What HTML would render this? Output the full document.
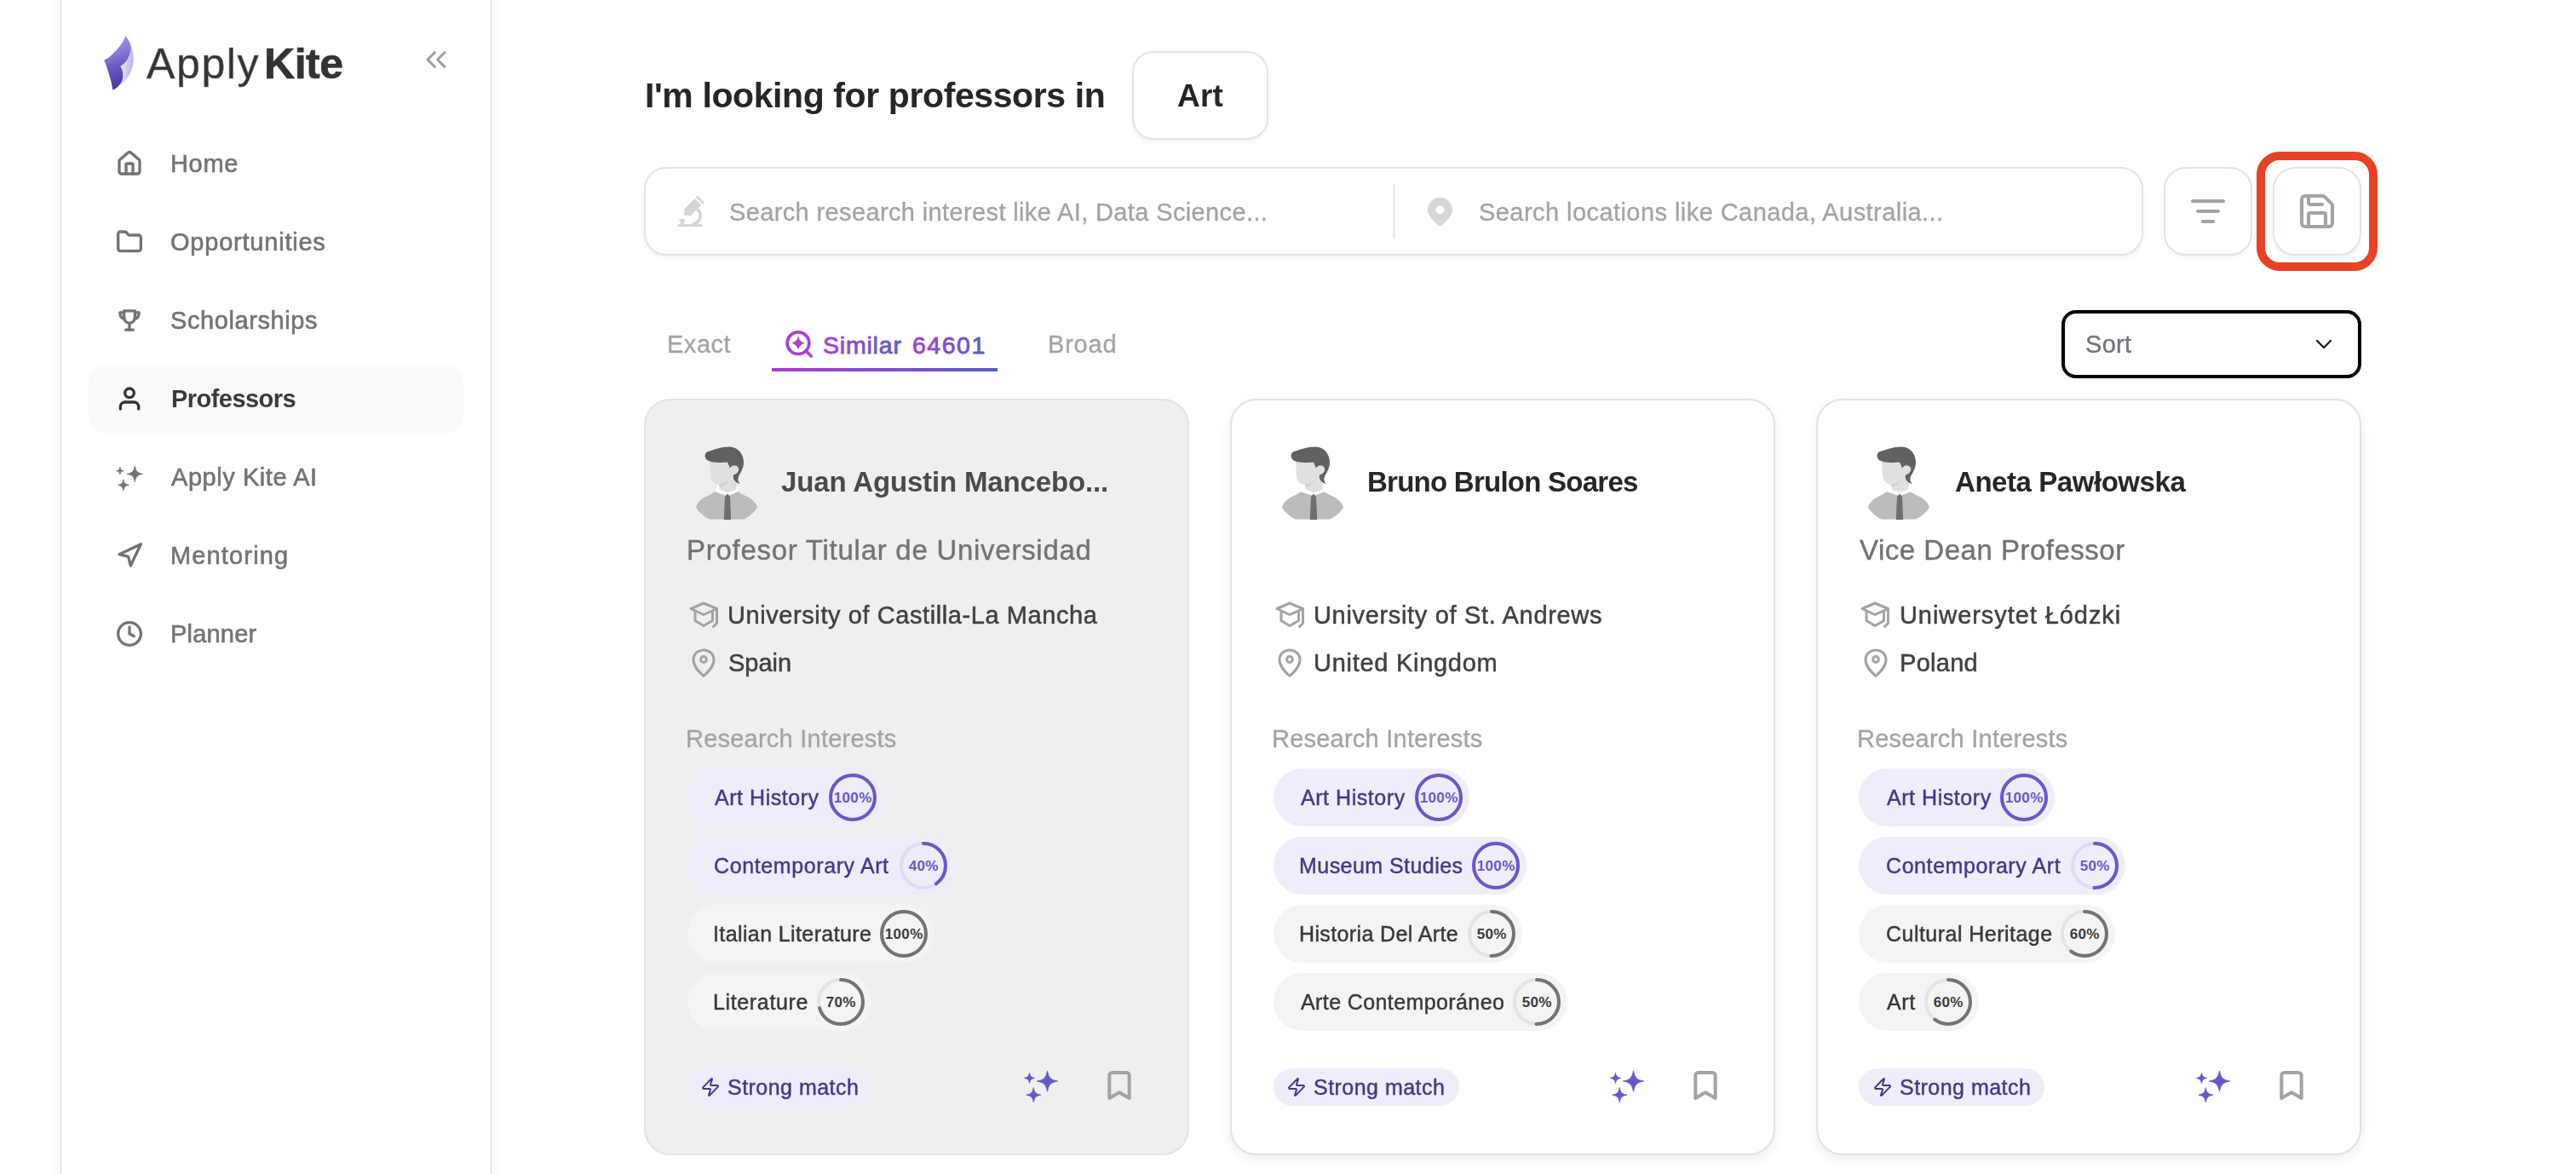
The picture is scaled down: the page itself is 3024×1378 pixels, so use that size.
<!DOCTYPE html>
<html lang="en">
<head>
<meta charset="utf-8">
<title>Apply Kite - Professors</title>
<style>
*{box-sizing:border-box;margin:0;padding:0}
html,body{width:3024px;height:1378px;overflow:hidden;background:#fff}
body{position:relative;font-family:"Liberation Sans",sans-serif;color:#262626}
.abs{position:absolute}
.t{position:absolute;white-space:nowrap;line-height:1;will-change:transform}
svg{display:block;overflow:visible}
.ic{position:absolute;fill:none;stroke:currentColor;stroke-linecap:round;stroke-linejoin:round}

/* sidebar */
#sidebar{position:absolute;left:71px;top:-20px;width:506px;height:1420px;background:#fff;border:1px solid #dadada;box-shadow:0 0 18px rgba(0,0,0,.07)}
.nav .t{font-size:28px;font-weight:400;color:#737373;-webkit-text-stroke:.6px #737373;left:201px}
.nav .ic{color:#737373;stroke-width:2.5}
.nav .active{position:absolute;left:104px;top:428px;width:440px;height:80px;border-radius:18px;background:#f9f9f9}

/* main */
.h1{font-size:40px;font-weight:700;color:#262626}
.box{position:absolute;background:#fff;border:2px solid #e4e4e4;box-shadow:0 3px 5px rgba(0,0,0,.05)}
.ph{font-size:28px;color:#a3a3a3;-webkit-text-stroke:.3px #a3a3a3}
.tab{font-size:28px;color:#a3a3a3;-webkit-text-stroke:.3px #a3a3a3}
.grad{background:linear-gradient(90deg,#a83fd1,#5a5cc7);-webkit-background-clip:text;background-clip:text;color:transparent;-webkit-text-stroke:.5px transparent}

/* cards */
.card{position:absolute;top:468px;height:888px;border-radius:31px;background:#fff;border:2px solid #e2e2e4;box-shadow:0 5px 16px rgba(0,0,0,.065)}
.card.hover{background:#efeff2;box-shadow:none;border-color:#e3e3e8}
.meta{color:#404040;-webkit-text-stroke:.5px #404040}
.mi{color:#a3a3a3;stroke-width:3}
.pill{position:absolute;height:68px;border-radius:34px}
.pill.p{background:#efedf9}
.pill.g{background:#f4f4f4}
.pill.p.hover{background:#eeecf8}
.pill.g.hover{background:#f4f4f5}
.pt.p{color:#3f3a8c;-webkit-text-stroke:.45px #3f3a8c}
.pt.g{color:#383838;-webkit-text-stroke:.45px #383838}
.ring text{font-family:"Liberation Sans",sans-serif;font-size:17px;font-weight:700}
.strong{position:absolute;width:218px;height:44px;border-radius:22px;background:#efedf9}
.strong.hover{background:#eeecf8}
.g1,.g2{background:linear-gradient(90deg,#a83fd1,#5a5cc7);-webkit-background-clip:text;background-clip:text;color:transparent;-webkit-text-stroke:.5px transparent;padding-right:2px}
</style>
</head>
<body>
<!-- SIDEBAR -->
<div id="sidebar"></div>
<div class="nav" id="nav">
  <svg class="abs" style="left:121px;top:42px" width="37" height="64" viewBox="0 0 37 64">
    <defs>
      <linearGradient id="kg1" x1="0.3" y1="0" x2="0.45" y2="1"><stop offset="0" stop-color="#988ce3"/><stop offset=".3" stop-color="#8a7cdb"/><stop offset=".55" stop-color="#6c5dc4"/><stop offset="1" stop-color="#4537a0"/></linearGradient>
      <linearGradient id="kg2" x1="0.35" y1="0.45" x2="1" y2="0.6"><stop offset="0" stop-color="#efedf9"/><stop offset="1" stop-color="#b4abe4"/></linearGradient>
    </defs>
    <path d="M32.4 11.2 C34.5 15 35.8 20 35.7 25.7 C35.6 31 35 35 33.9 38.7 C32.8 42 31.5 45 29.5 48.1 C27.5 51 25 54 21.6 56.8 C18.5 59.5 15 62 11.4 63.7 L20.3 35.8 L28 28.5 Z" fill="url(#kg2)"/>
    <path d="M26.5 0.3 C29 4 31.5 8 32.4 11.2 C33 15 32.5 18 31.7 20 C30.5 24 29 26.5 28 28.5 C26 31.5 23.5 33.8 20.3 35.8 C22 38.5 23 41 23.2 44 C23.4 47 23.3 49 23 50.5 C22.3 53.5 21 55.5 19.4 57.5 C17 60.5 14.5 62.3 11.4 63.7 C10.8 60 10 56 9 52 C7.3 46 5.5 40 3.5 34.3 L1.2 28.5 C5 27 8 24.5 10.7 22 C14 19 17 15.5 19.4 12.6 C22 9.3 24.5 5 26.5 0.3 Z" fill="url(#kg1)"/>
  </svg>
<div class="t " style="left:172.0px;top:50.2px;font-size:50px;letter-spacing:1.63px;color:#333;">Apply</div><div class="t " style="left:309.5px;top:50.2px;font-size:50px;font-weight:700;letter-spacing:-0.45px;color:#333;-webkit-text-stroke:.7px #333;">Kite</div>
  <svg class="ic" style="left:492px;top:50px;color:#a0a0a0;stroke-width:1.8" width="40" height="40" viewBox="0 0 24 24"><path d="m11 17-5-5 5-5"/><path d="m18 17-5-5 5-5"/></svg>
  <div class="active"></div>
  <svg class="ic" style="left:136px;top:176px" width="32" height="32" viewBox="0 0 24 24"><path d="M15 21v-8a1 1 0 0 0-1-1h-4a1 1 0 0 0-1 1v8"/><path d="M3 10a2 2 0 0 1 .709-1.528l7-5.999a2 2 0 0 1 2.582 0l7 5.999A2 2 0 0 1 21 10v9a2 2 0 0 1-2 2H5a2 2 0 0 1-2-2z"/></svg>
  <svg class="ic" style="left:136px;top:268px" width="32" height="32" viewBox="0 0 24 24"><path d="M20 20a2 2 0 0 0 2-2V8a2 2 0 0 0-2-2h-7.9a2 2 0 0 1-1.69-.9L9.6 3.9A2 2 0 0 0 7.93 3H4a2 2 0 0 0-2 2v13a2 2 0 0 0 2 2Z"/></svg>
  <svg class="ic" style="left:136px;top:360px" width="32" height="32" viewBox="0 0 24 24"><path d="M7.2 3.6H16.8V9.6a4.8 4.8 0 0 1-9.6 0Z"/><path d="M7.2 5.2H3.6c0 3 1.4 5 3.9 5.4"/><path d="M16.8 5.2h3.6c0 3-1.4 5-3.9 5.4"/><path d="M12 14.6V20.4"/><path d="M8.8 20.4h6.4"/></svg>
  <svg class="ic" style="left:136px;top:452px;color:#333" width="32" height="32" viewBox="0 0 24 24"><path d="M20 21v-2a4 4 0 0 0-4-4H8a4 4 0 0 0-4 4v2"/><circle cx="12" cy="7" r="4"/></svg>
  <svg class="abs" style="left:134px;top:542px" width="36" height="36" viewBox="0 0 36 36" fill="#737373" stroke="#737373" stroke-width="0.8" stroke-linejoin="round"><path d="M24.3 5.100000000000001 C25.59 11.47 27.13 13.01 33.5 14.3 C27.13 15.59 25.59 17.13 24.3 23.5 C23.01 17.13 21.47 15.59 15.100000000000001 14.3 C21.47 13.01 23.01 11.47 24.3 5.100000000000001Z"/><path d="M6.9 6.499999999999999 C7.49 9.41 8.19 10.11 11.100000000000001 10.7 C8.19 11.29 7.49 11.99 6.9 14.899999999999999 C6.31 11.99 5.61 11.29 2.7 10.7 C5.61 10.11 6.31 9.41 6.9 6.499999999999999Z"/><path d="M10.9 20.700000000000003 C11.82 25.27 12.93 26.38 17.5 27.3 C12.93 28.22 11.82 29.33 10.9 33.9 C9.98 29.33 8.87 28.22 4.300000000000001 27.3 C8.87 26.38 9.98 25.27 10.9 20.700000000000003Z"/></svg>
  <svg class="ic" style="left:136px;top:636px" width="32" height="32" viewBox="0 0 24 24"><polygon points="3 11 22 2 13 21 11 13 3 11"/></svg>
  <svg class="ic" style="left:136px;top:728px" width="32" height="32" viewBox="0 0 24 24"><circle cx="12" cy="12" r="10"/><polyline points="12 6 12 12 16 14"/></svg>
<div class="t " style="left:199.8px;top:178.0px;font-size:29px;letter-spacing:0.66px;">Home</div>
<div class="t " style="left:200.4px;top:270.0px;font-size:29px;letter-spacing:0.78px;">Opportunities</div>
<div class="t " style="left:200.2px;top:362.0px;font-size:29px;letter-spacing:0.59px;">Scholarships</div>
<div class="t " style="left:200.6px;top:454.0px;font-size:29px;font-weight:700;letter-spacing:-0.55px;color:#3a3a3a;-webkit-text-stroke:0;">Professors</div>
<div class="t " style="left:200.9px;top:546.0px;font-size:29px;letter-spacing:0.56px;">Apply Kite AI</div>
<div class="t " style="left:199.5px;top:638.0px;font-size:29px;letter-spacing:1.15px;">Mentoring</div>
<div class="t " style="left:199.5px;top:730.0px;font-size:29px;letter-spacing:0.20px;">Planner</div>
</div>
<!-- MAIN -->
<div id="main">
<div class="t " style="left:756.7px;top:91.5px;font-size:41px;font-weight:700;letter-spacing:-0.40px;color:#262626;">I'm looking for professors in</div>
<div class="box" style="left:1329px;top:60px;width:160px;height:104px;border-radius:25px"></div>
<div class="t " style="left:1381.6px;top:94.2px;font-size:37px;font-weight:700;letter-spacing:0.24px;color:#262626;">Art</div>
  <div class="box" style="left:756px;top:196px;width:1760px;height:104px;border-radius:26px"></div>
  <div class="abs" style="left:1636px;top:216px;width:1px;height:64px;background:#cfcfcf"></div>
  <svg class="abs" style="left:794px;top:228px" width="36" height="40" viewBox="0 0 36 40" fill="#d4d4d4" stroke="#d4d4d4" stroke-linejoin="round"><path d="M24.8 3.4 L31.2 9.8" stroke-width="3.2" stroke-linecap="round" fill="none"/><path d="M21.7 6 L28.3 12.6 L16.4 24.6 L14.2 24.6 L12.6 23 L10.6 24.6 L9.4 23.2 L10.6 21.4 L9.6 18.2 Z" stroke-width="1.4"/><path d="M24.6 17.6 C30.5 22.5 29.5 32.5 19 35.4" stroke-width="3.6" fill="none"/><rect x="1.6" y="35.3" width="28.8" height="2.6" rx="1" stroke="none"/><path d="M4.4 29.2 H9.4 L10.3 30.5 L9.4 31.8 H8.7 V35.3 H5.1 V31.8 H4.4 L3.4 30.5 Z" stroke-width=".4"/></svg>
  <svg class="abs" style="left:1676px;top:232px" width="29" height="34" viewBox="0 0 29 34"><path d="M14.5 0 C6.5 0 0 6.3 0 14.2 C0 22 8 28.5 14.5 34 C21 28.5 29 22 29 14.2 C29 6.3 22.5 0 14.5 0Z" fill="#d6d6d6"/><circle cx="14.5" cy="14.2" r="5" fill="#fff"/></svg>
<div class="t ph" style="left:856.3px;top:234.8px;font-size:29px;letter-spacing:0.37px;">Search research interest like AI, Data Science...</div><div class="t ph" style="left:1735.8px;top:234.8px;font-size:29px;letter-spacing:0.44px;">Search locations like Canada, Australia...</div>
  <div class="box" style="left:2540px;top:196px;width:104px;height:104px;border-radius:26px"></div>
  <svg class="ic" style="left:2568px;top:224px;color:#a3a3a3;stroke-width:2" width="48" height="48" viewBox="0 0 24 24"><path d="M3 6h18"/><path d="M6 12h12"/><path d="M9 18h6"/></svg>
  <div class="box" style="left:2668px;top:196px;width:104px;height:104px;border-radius:26px"></div>
  <svg class="ic" style="left:2696px;top:224px;color:#a3a3a3;stroke-width:2" width="48" height="48" viewBox="0 0 24 24"><path d="M15.2 3a2 2 0 0 1 1.4.6l3.8 3.8a2 2 0 0 1 .6 1.4V19a2 2 0 0 1-2 2H5a2 2 0 0 1-2-2V5a2 2 0 0 1 2-2z"/><path d="M17 21v-7a1 1 0 0 0-1-1H8a1 1 0 0 0-1 1v7"/><path d="M7 3v4a1 1 0 0 0 1 1h7"/></svg>
  <div class="abs" style="left:2649px;top:178px;width:142px;height:140px;border:10px solid #e84124;border-radius:27px"></div>
<div class="t tab" style="left:782.8px;top:390.0px;font-size:29px;letter-spacing:0.53px;">Exact</div>
  <svg class="abs" style="left:921px;top:387px" width="34" height="34" viewBox="0 0 34 34" fill="none" stroke="#a840d2" stroke-width="3.7" stroke-linecap="round"><circle cx="16" cy="15.7" r="12.8"/><path d="M25.6 25.2 L31.3 31"/><path d="M16 9.1 C17.32 12.80 18.90 14.38 22.6 15.7 C18.90 17.02 17.32 18.60 16 22.299999999999997 C14.68 18.60 13.10 17.02 9.4 15.7 C13.10 14.38 14.68 12.80 16 9.1Z" fill="#a840d2" stroke-width="1" stroke-linejoin="round"/></svg>
<svg class="abs" style="left:963.6px;top:385.5px" width="105.4" height="40"><defs><linearGradient id="gg14" gradientUnits="userSpaceOnUse" x1="3.0" y1="0" x2="94.4" y2="0"><stop offset="0" stop-color="#a840d2"/><stop offset="1" stop-color="#595bc7"/></linearGradient></defs><text x="2" y="28.5" font-family="Liberation Sans, sans-serif" font-size="28.5" letter-spacing="0.80" fill="url(#gg14)" stroke="url(#gg14)" stroke-width="0.8" stroke-linejoin="round">Similar</text></svg><svg class="abs" style="left:1069.0px;top:385.5px" width="97.5" height="40"><defs><linearGradient id="gg15" gradientUnits="userSpaceOnUse" x1="3.0" y1="0" x2="86.5" y2="0"><stop offset="0" stop-color="#a840d2"/><stop offset="1" stop-color="#595bc7"/></linearGradient></defs><text x="2" y="28.5" font-family="Liberation Sans, sans-serif" font-size="28.5" letter-spacing="1.52" fill="url(#gg15)" stroke="url(#gg15)" stroke-width="0.8" stroke-linejoin="round">64601</text></svg>
  <div class="abs" style="left:906px;top:432px;width:265px;height:4px;background:linear-gradient(90deg,#a83fd1,#5a5cc7)"></div>
<div class="t tab" style="left:1230.0px;top:390.0px;font-size:29px;letter-spacing:0.81px;">Broad</div>
  <div class="abs" style="left:2420px;top:364px;width:352px;height:80px;border:4px solid #000;border-radius:17px;background:#fff;box-shadow:0 2px 4px rgba(0,0,0,.06)"></div>
<div class="t " style="left:2448.0px;top:390.0px;font-size:29px;letter-spacing:0.29px;color:#71717a;-webkit-text-stroke:.3px #71717a;">Sort</div>
  <svg class="ic" style="left:2712px;top:388px;color:#18181b;stroke-width:1.6" width="32" height="32" viewBox="0 0 24 24"><path d="m6 9 6 6 6-6"/></svg>

<!-- cards -->
<div class="card hover" style="left:756px;width:640px"></div>
<svg class="abs" style="left:811.4px;top:520px" width="92" height="94" viewBox="0 0 92 94">
<path d="M6 75.2 C8 69 14 64 21 61.5 L28 57.2 L42 61.5 L55.4 57.2 L63 61.5 C70 64 76 69 78 75.2 C75 81 69 86 62 89.6 L21.8 89.6 C15 86 9 81 6 75.2Z" fill="#bcbcbc"/>
<path d="M31 50 L55 50 L55 57 L49 60 L43 62 L36 60 L29 57Z" fill="#fff"/>
<path d="M22 22 L54 22 L54 48 L53 55 L43 58 L34 55 L33 49 C27 48 23 44 23 38Z" fill="#e0e0e0"/>
<path d="M33 49 C38 48 42 46 45 43 C43 47 39 50 34 52Z" fill="#cfcfcf"/>
<circle cx="51.5" cy="31" r="5" fill="#e0e0e0"/>
<path d="M43 59.5 L46 63 L47.2 90 L38.8 90 L40 63Z" fill="#6e6e6e"/>
<path d="M20 10 C16 11 15.5 17 19 20 C26 24 36 23 43 22.5 L46 29.5 C48 25.5 53 25 55.5 28.5 C57.5 32 55 36 50 37.5 C49 42 51 46 58 48 C56 46 55 44 55.5 41 C57 36 62.5 30 62 22 C61.5 13 56 5 46 4.5 C36 4 28 7.5 20 10Z" fill="#616161"/>
</svg>
<div class="t " style="left:917.0px;top:548.8px;font-size:33px;font-weight:700;letter-spacing:-0.15px;color:#4a4a4a;">Juan Agustin Mancebo...</div>
<div class="t " style="left:805.7px;top:629.1px;font-size:33px;letter-spacing:0.73px;color:#737373;-webkit-text-stroke:.4px #737373;">Profesor Titular de Universidad</div>
<svg class="ic mi" style="left:807.5px;top:704px" width="38" height="36" viewBox="0 0 38 36"><path d="M3 10.5 L18 4 L33.5 10.5 L18 17.5 Z"/><path d="M8 13.5 V24.5 L18 30.5 L28.5 24.5 V13.5"/><path d="M33.5 10.5 V27.5 L29.5 31.5"/></svg>
<div class="t meta" style="left:854.0px;top:708.2px;font-size:29px;letter-spacing:0.58px;">University of Castilla-La Mancha</div>
<svg class="ic mi" style="left:811px;top:759.5px" width="30" height="36" viewBox="0 0 30 36"><path d="M15 33.5 C9 28 3 22 3 14.5 C3 7.5 8.5 3 15 3 C21.5 3 27 7.5 27 14.5 C27 22 21 28 15 33.5Z"/><circle cx="15" cy="14" r="3.4"/></svg>
<div class="t meta" style="left:855.0px;top:764.2px;font-size:29px;letter-spacing:-0.01px;">Spain</div>
<div class="t " style="left:804.5px;top:853.2px;font-size:29px;letter-spacing:0.23px;color:#a3a3a3;-webkit-text-stroke:.3px #a3a3a3;">Research Interests</div>
<div class="pill p hover" style="left:806.5px;top:902px;width:230.1px"></div>
<div class="t pt p" style="left:839.0px;top:924.2px;font-size:25px;letter-spacing:0.54px;">Art History</div>
<svg class="abs ring" style="left:972.6px;top:908.0px" width="56" height="56" viewBox="0 0 56 56"><circle cx="28" cy="28" r="26" fill="none" stroke="#dfdbf3" stroke-width="4"/><circle cx="28" cy="28" r="26" fill="none" stroke="#6459c9" stroke-width="4"/><text x="28.2" y="33.9" text-anchor="middle" fill="#6459c9" letter-spacing=".35">100%</text></svg>
<div class="pill p hover" style="left:806.5px;top:982px;width:313.0px"></div>
<div class="t pt p" style="left:838.0px;top:1004.2px;font-size:25px;letter-spacing:0.61px;">Contemporary Art</div>
<svg class="abs ring" style="left:1055.5px;top:988.0px" width="56" height="56" viewBox="0 0 56 56"><circle cx="28" cy="28" r="26" fill="none" stroke="#dfdbf3" stroke-width="4"/><circle cx="28" cy="28" r="26" fill="none" stroke="#6459c9" stroke-width="4" stroke-linecap="round" stroke-dasharray="65.35 163.36" transform="rotate(-90 28 28)"/><text x="28.2" y="33.9" text-anchor="middle" fill="#6459c9" letter-spacing=".35">40%</text></svg>
<div class="pill g hover" style="left:806.5px;top:1062px;width:290.5px"></div>
<div class="t pt g" style="left:837.0px;top:1084.2px;font-size:25px;letter-spacing:0.39px;">Italian Literature</div>
<svg class="abs ring" style="left:1033.0px;top:1068.0px" width="56" height="56" viewBox="0 0 56 56"><circle cx="28" cy="28" r="26" fill="none" stroke="#e4e4e4" stroke-width="4"/><circle cx="28" cy="28" r="26" fill="none" stroke="#737373" stroke-width="4"/><text x="28.2" y="33.9" text-anchor="middle" fill="#3a3a3a" letter-spacing=".35">100%</text></svg>
<div class="pill g hover" style="left:806.5px;top:1142px;width:216.0px"></div>
<div class="t pt g" style="left:837.0px;top:1164.2px;font-size:25px;letter-spacing:0.64px;">Literature</div>
<svg class="abs ring" style="left:958.5px;top:1148.0px" width="56" height="56" viewBox="0 0 56 56"><circle cx="28" cy="28" r="26" fill="none" stroke="#e4e4e4" stroke-width="4"/><circle cx="28" cy="28" r="26" fill="none" stroke="#737373" stroke-width="4" stroke-linecap="round" stroke-dasharray="114.35 163.36" transform="rotate(-90 28 28)"/><text x="28.2" y="33.9" text-anchor="middle" fill="#3a3a3a" letter-spacing=".35">70%</text></svg>
<div class="strong hover" style="left:806.5px;top:1254px"></div>
<svg class="ic" style="left:822px;top:1264px;color:#3f3a8c;stroke-width:2" width="24" height="24" viewBox="0 0 24 24"><path d="M4 14a1 1 0 0 1-.78-1.63l9.9-10.2a.5.5 0 0 1 .86.46l-1.92 6.02A1 1 0 0 0 13 10h7a1 1 0 0 1 .78 1.63l-9.9 10.2a.5.5 0 0 1-.86-.46l1.92-6.02A1 1 0 0 0 11 14z"/></svg>
<div class="t pt p" style="left:854.2px;top:1264.2px;font-size:25px;letter-spacing:0.47px;">Strong match</div>
<svg class="abs" style="left:1200px;top:1255px" width="44" height="40" viewBox="0 0 44 40" fill="#6459c9" stroke="#6459c9" stroke-width="0.9" stroke-linejoin="round"><path d="M29.5 1.9000000000000004 C31.19 10.27 33.23 12.31 41.6 14 C33.23 15.69 31.19 17.73 29.5 26.1 C27.81 17.73 25.77 15.69 17.4 14 C25.77 12.31 27.81 10.27 29.5 1.9000000000000004Z"/><path d="M8.5 4.300000000000001 C9.35 8.52 10.38 9.55 14.6 10.4 C10.38 11.25 9.35 12.28 8.5 16.5 C7.65 12.28 6.62 11.25 2.4000000000000004 10.4 C6.62 9.55 7.65 8.52 8.5 4.300000000000001Z"/><path d="M13.3 21.7 C14.49 27.58 15.92 29.01 21.8 30.2 C15.92 31.39 14.49 32.82 13.3 38.7 C12.11 32.82 10.68 31.39 4.800000000000001 30.2 C10.68 29.01 12.11 27.58 13.3 21.7Z"/></svg>
<svg class="ic" style="left:1294px;top:1254px;color:#a3a3a3;stroke-width:2.4" width="40" height="40" viewBox="0 0 24 24"><path d="m19 21-7-4-7 4V5a2 2 0 0 1 2-2h10a2 2 0 0 1 2 2v16z"/></svg>
<div class="card" style="left:1444px;width:640px"></div>
<svg class="abs" style="left:1499.4px;top:520px" width="92" height="94" viewBox="0 0 92 94">
<path d="M6 75.2 C8 69 14 64 21 61.5 L28 57.2 L42 61.5 L55.4 57.2 L63 61.5 C70 64 76 69 78 75.2 C75 81 69 86 62 89.6 L21.8 89.6 C15 86 9 81 6 75.2Z" fill="#bcbcbc"/>
<path d="M31 50 L55 50 L55 57 L49 60 L43 62 L36 60 L29 57Z" fill="#fff"/>
<path d="M22 22 L54 22 L54 48 L53 55 L43 58 L34 55 L33 49 C27 48 23 44 23 38Z" fill="#e0e0e0"/>
<path d="M33 49 C38 48 42 46 45 43 C43 47 39 50 34 52Z" fill="#cfcfcf"/>
<circle cx="51.5" cy="31" r="5" fill="#e0e0e0"/>
<path d="M43 59.5 L46 63 L47.2 90 L38.8 90 L40 63Z" fill="#6e6e6e"/>
<path d="M20 10 C16 11 15.5 17 19 20 C26 24 36 23 43 22.5 L46 29.5 C48 25.5 53 25 55.5 28.5 C57.5 32 55 36 50 37.5 C49 42 51 46 58 48 C56 46 55 44 55.5 41 C57 36 62.5 30 62 22 C61.5 13 56 5 46 4.5 C36 4 28 7.5 20 10Z" fill="#616161"/>
</svg>
<div class="t " style="left:1605.0px;top:548.8px;font-size:33px;font-weight:700;letter-spacing:-0.75px;color:#262626;">Bruno Brulon Soares</div>
<svg class="ic mi" style="left:1495.5px;top:704px" width="38" height="36" viewBox="0 0 38 36"><path d="M3 10.5 L18 4 L33.5 10.5 L18 17.5 Z"/><path d="M8 13.5 V24.5 L18 30.5 L28.5 24.5 V13.5"/><path d="M33.5 10.5 V27.5 L29.5 31.5"/></svg>
<div class="t meta" style="left:1541.8px;top:708.2px;font-size:29px;letter-spacing:0.67px;">University of St. Andrews</div>
<svg class="ic mi" style="left:1499px;top:759.5px" width="30" height="36" viewBox="0 0 30 36"><path d="M15 33.5 C9 28 3 22 3 14.5 C3 7.5 8.5 3 15 3 C21.5 3 27 7.5 27 14.5 C27 22 21 28 15 33.5Z"/><circle cx="15" cy="14" r="3.4"/></svg>
<div class="t meta" style="left:1541.8px;top:764.2px;font-size:29px;letter-spacing:0.72px;">United Kingdom</div>
<div class="t " style="left:1492.5px;top:853.2px;font-size:29px;letter-spacing:0.23px;color:#a3a3a3;-webkit-text-stroke:.3px #a3a3a3;">Research Interests</div>
<div class="pill p" style="left:1494.5px;top:902px;width:230.2px"></div>
<div class="t pt p" style="left:1527.0px;top:924.2px;font-size:25px;letter-spacing:0.55px;">Art History</div>
<svg class="abs ring" style="left:1660.7px;top:908.0px" width="56" height="56" viewBox="0 0 56 56"><circle cx="28" cy="28" r="26" fill="none" stroke="#dfdbf3" stroke-width="4"/><circle cx="28" cy="28" r="26" fill="none" stroke="#6459c9" stroke-width="4"/><text x="28.2" y="33.9" text-anchor="middle" fill="#6459c9" letter-spacing=".35">100%</text></svg>
<div class="pill p" style="left:1494.5px;top:982px;width:297.0px"></div>
<div class="t pt p" style="left:1525.0px;top:1004.2px;font-size:25px;letter-spacing:0.45px;">Museum Studies</div>
<svg class="abs ring" style="left:1727.5px;top:988.0px" width="56" height="56" viewBox="0 0 56 56"><circle cx="28" cy="28" r="26" fill="none" stroke="#dfdbf3" stroke-width="4"/><circle cx="28" cy="28" r="26" fill="none" stroke="#6459c9" stroke-width="4"/><text x="28.2" y="33.9" text-anchor="middle" fill="#6459c9" letter-spacing=".35">100%</text></svg>
<div class="pill g" style="left:1494.5px;top:1062px;width:292.7px"></div>
<div class="t pt g" style="left:1525.0px;top:1084.2px;font-size:25px;letter-spacing:0.38px;">Historia Del Arte</div>
<svg class="abs ring" style="left:1723.2px;top:1068.0px" width="56" height="56" viewBox="0 0 56 56"><circle cx="28" cy="28" r="26" fill="none" stroke="#e4e4e4" stroke-width="4"/><circle cx="28" cy="28" r="26" fill="none" stroke="#737373" stroke-width="4" stroke-linecap="round" stroke-dasharray="81.68 163.36" transform="rotate(-90 28 28)"/><text x="28.2" y="33.9" text-anchor="middle" fill="#3a3a3a" letter-spacing=".35">50%</text></svg>
<div class="pill g" style="left:1494.5px;top:1142px;width:345.5px"></div>
<div class="t pt g" style="left:1527.0px;top:1164.2px;font-size:25px;letter-spacing:0.40px;">Arte Contemporáneo</div>
<svg class="abs ring" style="left:1776.0px;top:1148.0px" width="56" height="56" viewBox="0 0 56 56"><circle cx="28" cy="28" r="26" fill="none" stroke="#e4e4e4" stroke-width="4"/><circle cx="28" cy="28" r="26" fill="none" stroke="#737373" stroke-width="4" stroke-linecap="round" stroke-dasharray="81.68 163.36" transform="rotate(-90 28 28)"/><text x="28.2" y="33.9" text-anchor="middle" fill="#3a3a3a" letter-spacing=".35">50%</text></svg>
<div class="strong" style="left:1494.5px;top:1254px"></div>
<svg class="ic" style="left:1510px;top:1264px;color:#3f3a8c;stroke-width:2" width="24" height="24" viewBox="0 0 24 24"><path d="M4 14a1 1 0 0 1-.78-1.63l9.9-10.2a.5.5 0 0 1 .86.46l-1.92 6.02A1 1 0 0 0 13 10h7a1 1 0 0 1 .78 1.63l-9.9 10.2a.5.5 0 0 1-.86-.46l1.92-6.02A1 1 0 0 0 11 14z"/></svg>
<div class="t pt p" style="left:1542.2px;top:1264.2px;font-size:25px;letter-spacing:0.47px;">Strong match</div>
<svg class="abs" style="left:1888px;top:1255px" width="44" height="40" viewBox="0 0 44 40" fill="#6459c9" stroke="#6459c9" stroke-width="0.9" stroke-linejoin="round"><path d="M29.5 1.9000000000000004 C31.19 10.27 33.23 12.31 41.6 14 C33.23 15.69 31.19 17.73 29.5 26.1 C27.81 17.73 25.77 15.69 17.4 14 C25.77 12.31 27.81 10.27 29.5 1.9000000000000004Z"/><path d="M8.5 4.300000000000001 C9.35 8.52 10.38 9.55 14.6 10.4 C10.38 11.25 9.35 12.28 8.5 16.5 C7.65 12.28 6.62 11.25 2.4000000000000004 10.4 C6.62 9.55 7.65 8.52 8.5 4.300000000000001Z"/><path d="M13.3 21.7 C14.49 27.58 15.92 29.01 21.8 30.2 C15.92 31.39 14.49 32.82 13.3 38.7 C12.11 32.82 10.68 31.39 4.800000000000001 30.2 C10.68 29.01 12.11 27.58 13.3 21.7Z"/></svg>
<svg class="ic" style="left:1982px;top:1254px;color:#a3a3a3;stroke-width:2.4" width="40" height="40" viewBox="0 0 24 24"><path d="m19 21-7-4-7 4V5a2 2 0 0 1 2-2h10a2 2 0 0 1 2 2v16z"/></svg>
<div class="card" style="left:2132px;width:640px"></div>
<svg class="abs" style="left:2186.9px;top:520px" width="92" height="94" viewBox="0 0 92 94">
<path d="M6 75.2 C8 69 14 64 21 61.5 L28 57.2 L42 61.5 L55.4 57.2 L63 61.5 C70 64 76 69 78 75.2 C75 81 69 86 62 89.6 L21.8 89.6 C15 86 9 81 6 75.2Z" fill="#bcbcbc"/>
<path d="M31 50 L55 50 L55 57 L49 60 L43 62 L36 60 L29 57Z" fill="#fff"/>
<path d="M22 22 L54 22 L54 48 L53 55 L43 58 L34 55 L33 49 C27 48 23 44 23 38Z" fill="#e0e0e0"/>
<path d="M33 49 C38 48 42 46 45 43 C43 47 39 50 34 52Z" fill="#cfcfcf"/>
<circle cx="51.5" cy="31" r="5" fill="#e0e0e0"/>
<path d="M43 59.5 L46 63 L47.2 90 L38.8 90 L40 63Z" fill="#6e6e6e"/>
<path d="M20 10 C16 11 15.5 17 19 20 C26 24 36 23 43 22.5 L46 29.5 C48 25.5 53 25 55.5 28.5 C57.5 32 55 36 50 37.5 C49 42 51 46 58 48 C56 46 55 44 55.5 41 C57 36 62.5 30 62 22 C61.5 13 56 5 46 4.5 C36 4 28 7.5 20 10Z" fill="#616161"/>
</svg>
<div class="t " style="left:2295.3px;top:548.8px;font-size:33px;font-weight:700;letter-spacing:-0.44px;color:#262626;">Aneta Pawłowska</div>
<div class="t " style="left:2182.8px;top:629.1px;font-size:33px;letter-spacing:0.51px;color:#737373;-webkit-text-stroke:.4px #737373;">Vice Dean Professor</div>
<svg class="ic mi" style="left:2183.0px;top:704px" width="38" height="36" viewBox="0 0 38 36"><path d="M3 10.5 L18 4 L33.5 10.5 L18 17.5 Z"/><path d="M8 13.5 V24.5 L18 30.5 L28.5 24.5 V13.5"/><path d="M33.5 10.5 V27.5 L29.5 31.5"/></svg>
<div class="t meta" style="left:2230.2px;top:708.2px;font-size:29px;letter-spacing:0.93px;">Uniwersytet Łódzki</div>
<svg class="ic mi" style="left:2186.5px;top:759.5px" width="30" height="36" viewBox="0 0 30 36"><path d="M15 33.5 C9 28 3 22 3 14.5 C3 7.5 8.5 3 15 3 C21.5 3 27 7.5 27 14.5 C27 22 21 28 15 33.5Z"/><circle cx="15" cy="14" r="3.4"/></svg>
<div class="t meta" style="left:2230.2px;top:764.2px;font-size:29px;letter-spacing:0.29px;">Poland</div>
<div class="t " style="left:2180.0px;top:853.2px;font-size:29px;letter-spacing:0.23px;color:#a3a3a3;-webkit-text-stroke:.3px #a3a3a3;">Research Interests</div>
<div class="pill p" style="left:2182.0px;top:902px;width:230.2px"></div>
<div class="t pt p" style="left:2214.5px;top:924.2px;font-size:25px;letter-spacing:0.55px;">Art History</div>
<svg class="abs ring" style="left:2348.2px;top:908.0px" width="56" height="56" viewBox="0 0 56 56"><circle cx="28" cy="28" r="26" fill="none" stroke="#dfdbf3" stroke-width="4"/><circle cx="28" cy="28" r="26" fill="none" stroke="#6459c9" stroke-width="4"/><text x="28.2" y="33.9" text-anchor="middle" fill="#6459c9" letter-spacing=".35">100%</text></svg>
<div class="pill p" style="left:2182.0px;top:982px;width:312.5px"></div>
<div class="t pt p" style="left:2213.5px;top:1004.2px;font-size:25px;letter-spacing:0.58px;">Contemporary Art</div>
<svg class="abs ring" style="left:2430.5px;top:988.0px" width="56" height="56" viewBox="0 0 56 56"><circle cx="28" cy="28" r="26" fill="none" stroke="#dfdbf3" stroke-width="4"/><circle cx="28" cy="28" r="26" fill="none" stroke="#6459c9" stroke-width="4" stroke-linecap="round" stroke-dasharray="81.68 163.36" transform="rotate(-90 28 28)"/><text x="28.2" y="33.9" text-anchor="middle" fill="#6459c9" letter-spacing=".35">50%</text></svg>
<div class="pill g" style="left:2182.0px;top:1062px;width:300.7px"></div>
<div class="t pt g" style="left:2213.5px;top:1084.2px;font-size:25px;letter-spacing:0.47px;">Cultural Heritage</div>
<svg class="abs ring" style="left:2418.7px;top:1068.0px" width="56" height="56" viewBox="0 0 56 56"><circle cx="28" cy="28" r="26" fill="none" stroke="#e4e4e4" stroke-width="4"/><circle cx="28" cy="28" r="26" fill="none" stroke="#737373" stroke-width="4" stroke-linecap="round" stroke-dasharray="98.02 163.36" transform="rotate(-90 28 28)"/><text x="28.2" y="33.9" text-anchor="middle" fill="#3a3a3a" letter-spacing=".35">60%</text></svg>
<div class="pill g" style="left:2182.0px;top:1142px;width:140.7px"></div>
<div class="t pt g" style="left:2214.5px;top:1164.2px;font-size:25px;letter-spacing:0.60px;">Art</div>
<svg class="abs ring" style="left:2258.7px;top:1148.0px" width="56" height="56" viewBox="0 0 56 56"><circle cx="28" cy="28" r="26" fill="none" stroke="#e4e4e4" stroke-width="4"/><circle cx="28" cy="28" r="26" fill="none" stroke="#737373" stroke-width="4" stroke-linecap="round" stroke-dasharray="98.02 163.36" transform="rotate(-90 28 28)"/><text x="28.2" y="33.9" text-anchor="middle" fill="#3a3a3a" letter-spacing=".35">60%</text></svg>
<div class="strong" style="left:2182.0px;top:1254px"></div>
<svg class="ic" style="left:2197.5px;top:1264px;color:#3f3a8c;stroke-width:2" width="24" height="24" viewBox="0 0 24 24"><path d="M4 14a1 1 0 0 1-.78-1.63l9.9-10.2a.5.5 0 0 1 .86.46l-1.92 6.02A1 1 0 0 0 13 10h7a1 1 0 0 1 .78 1.63l-9.9 10.2a.5.5 0 0 1-.86-.46l1.92-6.02A1 1 0 0 0 11 14z"/></svg>
<div class="t pt p" style="left:2229.7px;top:1264.2px;font-size:25px;letter-spacing:0.47px;">Strong match</div>
<svg class="abs" style="left:2575.5px;top:1255px" width="44" height="40" viewBox="0 0 44 40" fill="#6459c9" stroke="#6459c9" stroke-width="0.9" stroke-linejoin="round"><path d="M29.5 1.9000000000000004 C31.19 10.27 33.23 12.31 41.6 14 C33.23 15.69 31.19 17.73 29.5 26.1 C27.81 17.73 25.77 15.69 17.4 14 C25.77 12.31 27.81 10.27 29.5 1.9000000000000004Z"/><path d="M8.5 4.300000000000001 C9.35 8.52 10.38 9.55 14.6 10.4 C10.38 11.25 9.35 12.28 8.5 16.5 C7.65 12.28 6.62 11.25 2.4000000000000004 10.4 C6.62 9.55 7.65 8.52 8.5 4.300000000000001Z"/><path d="M13.3 21.7 C14.49 27.58 15.92 29.01 21.8 30.2 C15.92 31.39 14.49 32.82 13.3 38.7 C12.11 32.82 10.68 31.39 4.800000000000001 30.2 C10.68 29.01 12.11 27.58 13.3 21.7Z"/></svg>
<svg class="ic" style="left:2669.5px;top:1254px;color:#a3a3a3;stroke-width:2.4" width="40" height="40" viewBox="0 0 24 24"><path d="m19 21-7-4-7 4V5a2 2 0 0 1 2-2h10a2 2 0 0 1 2 2v16z"/></svg>
</div>
</body>
</html>
